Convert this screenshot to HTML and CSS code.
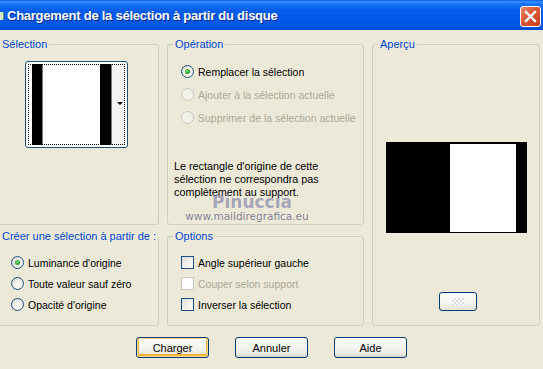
FILE: index.html
```html
<!DOCTYPE html>
<html lang="fr">
<head>
    <meta charset="UTF-8">
    <title>Chargement de la sélection à partir du disque</title>
    <link rel="stylesheet" href="styles.css">
</head>
<body>

    <div class="titlebar">
        <span class="title-icon"></span>
        <span class="title-text">Chargement de la sélection à partir du disque</span>
        <span class="close-btn">
            <svg width="13" height="13" viewBox="0 0 13 13">
                <path d="M2 2 L11 11 M11 2 L2 11" stroke="#fff" stroke-width="2.4" stroke-linecap="square"/>
            </svg>
        </span>
    </div>

    <div class="content">
        <fieldset class="group group-selection">
            <legend>Sélection</legend>
            <div class="thumb">
                <div class="thumb-inner">
                    <span class="thumb-arrow"></span>
                </div>
            </div>
        </fieldset>

        <fieldset class="group group-operation">
            <legend>Opération</legend>
            <div class="rows">
                <div class="row"><span class="radio checked"></span>Remplacer la sélection</div>
                <div class="row disabled"><span class="radio"></span>Ajouter à la sélection actuelle</div>
                <div class="row disabled"><span class="radio"></span>Supprimer de la sélection actuelle</div>
            </div>
            <p class="message">Le rectangle d'origine de cette sélection ne correspondra pas complètement au support.</p>
            <div class="watermark">
                <span class="wm-name">Pinuccia</span>
                <span class="wm-url">www.maildiregrafica.eu</span>
            </div>
        </fieldset>

        <fieldset class="group group-apercu">
            <legend>Aperçu</legend>
            <div class="preview"><div class="preview-fill"></div></div>
            <span class="small-btn"><span class="checker"></span></span>
        </fieldset>

        <fieldset class="group group-creer">
            <legend>Créer une sélection à partir de :</legend>
            <div class="rows">
                <div class="row"><span class="radio checked"></span>Luminance d'origine</div>
                <div class="row"><span class="radio"></span>Toute valeur sauf zéro</div>
                <div class="row"><span class="radio"></span>Opacité d'origine</div>
            </div>
        </fieldset>

        <fieldset class="group group-options">
            <legend>Options</legend>
            <div class="rows">
                <div class="row"><span class="check"></span>Angle supérieur gauche</div>
                <div class="row disabled"><span class="check"></span>Couper selon support</div>
                <div class="row"><span class="check"></span>Inverser la sélection</div>
            </div>
        </fieldset>
    </div>

    <div class="buttons">
        <button type="button" class="btn btn-default">Charger</button>
        <button type="button" class="btn">Annuler</button>
        <button type="button" class="btn">Aide</button>
    </div>

</body>
</html>
```

FILE: styles.css
```css
body {
    margin: 0;
    width: 543px;
    height: 369px;
    overflow: hidden;
    background-color: #ece9d8;
    font-family: "Liberation Sans", Arial, sans-serif;
    font-size: 10.5px;
    color: #000;
}
.titlebar {
    height: 30px;
    display: flex;
    align-items: center;
    background: linear-gradient(to bottom, #0a5ce8 0%, #3a8ffd 6%, #1673f8 14%, #045deb 35%, #0058e7 70%, #0056e2 90%, #0049cc 100%);
    color: #fff;
}
.title-icon {
    width: 3px;
    height: 8px;
    margin-top: 1px;
    background-color: #d6e6c8;
    border-right: 1px solid #6f8a5c;
}
.title-text {
    margin-left: 3px;
    font-weight: bold;
    font-size: 13px;
    letter-spacing: -0.25px;
    text-shadow: 1px 1px 0 #0b2a8a;
    flex: 1;
}
.close-btn {
    width: 19px;
    height: 19px;
    margin-right: 2px;
    margin-top: 3px;
    border: 1px solid #fff;
    border-radius: 3px;
    background: linear-gradient(135deg, #e98a6c 0%, #dc5a36 40%, #c9401c 100%);
    display: flex;
    align-items: center;
    justify-content: center;
}
.content {
    display: grid;
    grid-template-columns: 165px 197px 168px;
    grid-template-rows: 187px 96px;
    column-gap: 8px;
    row-gap: 5px;
    margin-left: -6px;
    padding-top: 8px;
}
.group {
    margin: 0;
    padding: 0;
    min-width: 0;
    border: 1px solid #d0d0bf;
    border-radius: 3px;
    position: relative;
}
.group legend {
    margin-left: 5px;
    padding: 0 2px;
    line-height: 13px;
    font-size: 11px;
    white-space: nowrap;
    color: #0046d5;
}
.group-selection { grid-column: 1; grid-row: 1; }
.group-operation { grid-column: 2; grid-row: 1; }
.group-apercu { grid-column: 3; grid-row: 1 / span 2; display: flex; flex-direction: column; align-items: center; }
.group-creer { grid-column: 1; grid-row: 2; }
.group-options { grid-column: 2; grid-row: 2; }

.thumb {
    width: 103px;
    height: 87px;
    margin: 10px auto 0;
    border: 1px solid #1c5180;
    border-radius: 3px;
    padding: 2px;
    box-sizing: border-box;
    background-color: #fff;
}
.thumb-inner {
    height: 100%;
    border: 1px dotted #000;
    box-sizing: border-box;
    position: relative;
    background: linear-gradient(to right, #fff 0 3px, #000 3px 13px, #7a7a7a 13px 14px, #fff 14px 71px, #000 71px 82px, #7a7a7a 82px 83px, #f4f4f4 83px);
}
.thumb-arrow {
    position: absolute;
    right: 1px;
    top: 37px;
    border-left: 3px solid transparent;
    border-right: 3px solid transparent;
    border-top: 3px solid #000;
}

.rows {
    padding-top: 9px;
    padding-left: 13px;
}
.row {
    height: 21px;
    display: flex;
    align-items: center;
    white-space: nowrap;
}
.group-operation .row { height: 23px; }
.row.disabled { color: #aca899; }

.radio {
    width: 13px;
    height: 13px;
    box-sizing: border-box;
    border: 1px solid #1c5180;
    border-radius: 50%;
    background: radial-gradient(circle at 65% 65%, #fff 0%, #f2f1ea 40%, #d6d4c8 100%);
    margin-right: 4px;
    display: flex;
    align-items: center;
    justify-content: center;
    flex-shrink: 0;
}
.radio.checked::after {
    content: "";
    width: 5px;
    height: 5px;
    border-radius: 50%;
    background: radial-gradient(circle at 40% 40%, #8fe08f 0%, #2fa82f 50%, #168a16 100%);
}
.row.disabled .radio {
    border-color: #cac8bb;
    background: #f2f1ea;
}
.group-creer .rows { padding-left: 16px; }

.check {
    width: 13px;
    height: 13px;
    box-sizing: border-box;
    border: 1px solid #1c5180;
    background: linear-gradient(135deg, #dcdcd7 0%, #f4f4f0 60%, #fff 100%);
    margin-right: 4px;
    flex-shrink: 0;
}
.row.disabled .check {
    border-color: #cac8bb;
    background: #fff;
}

.message {
    margin: 31px 0 0 6px;
    line-height: 13px;
    font-size: 10.8px;
    width: 180px;
}
.watermark {
    position: absolute;
    left: 18px;
    top: 144px;
    width: 122px;
    display: flex;
    flex-direction: column;
    align-items: center;
    pointer-events: none;
}
.wm-name {
    font-family: "DejaVu Sans", sans-serif;
    font-size: 17px;
    font-weight: bold;
    line-height: 14px;
    margin-left: 10px;
    color: rgba(120, 120, 165, 0.6);
}
.wm-url {
    font-family: "DejaVu Sans", sans-serif;
    font-size: 10.5px;
    line-height: 14px;
    color: rgba(110, 110, 140, 0.85);
}

.preview {
    margin-top: 91px;
    width: 141px;
    height: 91px;
    box-sizing: border-box;
    padding: 2px 11px 1px 64px;
    background-color: #000;
    display: flex;
}
.preview-fill {
    flex: 1;
    background-color: #fff;
}
.small-btn {
    margin-top: 59px;
    margin-left: 3px;
    width: 38px;
    height: 19px;
    box-sizing: border-box;
    border: 1px solid #003c74;
    border-radius: 3px;
    background: linear-gradient(to bottom, #fff 0%, #f4f4f0 60%, #e3e2da 100%);
    display: flex;
    align-items: center;
    justify-content: center;
}
.checker {
    width: 12px;
    height: 8px;
    background: repeating-conic-gradient(#dcdcdc 0 25%, #fff 0 50%) 0 0 / 4px 4px;
}

.buttons {
    display: flex;
    justify-content: center;
    gap: 26px;
    margin-top: 11px;
}
.btn {
    width: 73px;
    height: 21px;
    padding: 0;
    font-family: inherit;
    font-size: 11px;
    color: #000;
    border: 1px solid #003c74;
    border-radius: 3px;
    background: linear-gradient(to bottom, #fff 0%, #f6f6f2 40%, #eceae3 85%, #d6d0c5 100%);
}
.btn-default {
    box-shadow: inset 0 0 0 1px #ffd899, inset 0 -1px 0 2px #f5b236;
}
```
